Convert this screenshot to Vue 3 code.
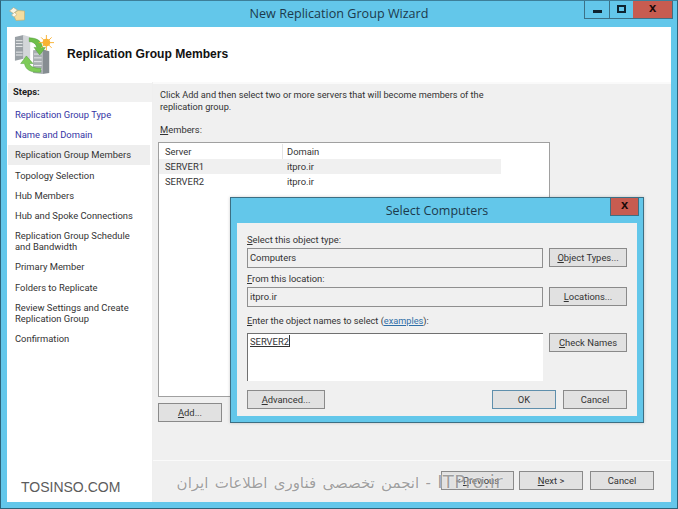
<template>
  <div class="wizard">
    <div class="titlebar">
      <svg class="app-icon" width="16" height="14" viewBox="0 0 16 14">
        <path d="M4 7 L9 3.5 L15.5 4 L15.5 13 L7 13.5 Z" fill="#f4dd9f" stroke="#c9ab66" stroke-width="0.6" />
        <path d="M0.5 4 L4.5 0.5 L8.5 3 L4.5 6.5 Z" fill="#f8f3e2" stroke="#b9a676" stroke-width="0.6" />
        <path d="M2.5 8 L5.5 5.5 L8 7.5 L5 10 Z" fill="#fbf6e6" stroke="#b9a676" stroke-width="0.5" />
      </svg>
      <span class="title">New Replication Group Wizard</span>
      <div class="controls">
        <div class="ctl ctl-min"><span class="min-glyph"></span></div>
        <div class="ctl ctl-max"><span class="max-glyph"></span></div>
        <div class="ctl ctl-close">x</div>
      </div>
    </div>

    <div class="client">
      <div class="header">
        <svg class="header-icon" width="40" height="40" viewBox="0 0 42 42">
          <path d="M1 2 L10 0 L10 25 L1 27 Z" fill="#9aa1a6" />
          <path d="M10 0 L17 2 L17 26 L10 25 Z" fill="#d3d6d9" />
          <path d="M2 6 H9 M2 9 H9 M2 12 H9 M2 18 H9 M2 21 H9" stroke="#eceeef" stroke-width="1" />
          <path d="M20 16 L30 15 L30 41 L20 40 Z" fill="#a9afb3" />
          <path d="M30 15 L37 17 L37 40 L30 41 Z" fill="#868d92" />
          <path d="M21 20 H29 M21 24 H29 M21 28 H29 M21 32 H29 M21 36 H29" stroke="#e8eaec" stroke-width="1" />
          <path d="M16 3 C25 3 29 7 30 13 L33 13 L27 21 L21 13 L24 13 C23 9 20 7 16 7 Z" fill="#6fbf4a" stroke="#4a9a35" stroke-width="0.5" />
          <path d="M28 39 C17 40 12 36 11 30 L7 30 L13 22 L20 30 L16 30 C17 33 21 35 28 35 Z" fill="#7ecb58" stroke="#4a9a35" stroke-width="0.5" />
          <circle cx="34" cy="8" r="4" fill="#f9b233" />
          <path d="M34 0 V16 M26 8 H42 M28.5 2.5 L39.5 13.5 M39.5 2.5 L28.5 13.5" stroke="#f9b233" stroke-width="1" />
        </svg>
        <span class="header-text">Replication Group Members</span>
      </div>

      <div class="middle">
        <div class="steps">
          <div class="steps-head">Steps:</div>
          <div
            v-for="step in steps"
            :key="step.name"
            class="step"
            :class="{ done: step.state === 'done', current: step.state === 'current' }"
          >{{ step.name }}</div>
        </div>

        <div class="content">
          <div class="main">
            <p class="intro">Click Add and then select two or more servers that will become members of the replication group.</p>
            <div class="members-label"><u>M</u>embers:</div>
            <div class="list">
              <div class="list-head">
                <div class="col-server">Server</div>
                <div class="col-domain">Domain</div>
              </div>
              <div v-for="(m, i) in members" :key="m.server" class="list-row" :class="{ selected: i === 0 }">
                <div class="col-server">{{ m.server }}</div>
                <div class="col-domain">{{ m.domain }}</div>
              </div>
            </div>
            <div class="add-row">
              <button class="btn add-btn"><u>A</u>dd...</button>
            </div>
          </div>
          <div class="footer">
            <button class="btn foot-btn prev">&lt; <u>P</u>revious</button>
            <button class="btn foot-btn"><u>N</u>ext &gt;</button>
            <button class="btn foot-btn cancel">Cancel</button>
          </div>
        </div>
      </div>
    </div>

    <div class="dialog">
      <div class="dialog-title">
        <span>Select Computers</span>
        <div class="dialog-close">x</div>
      </div>
      <div class="dialog-body">
        <label class="field-label"><u>S</u>elect this object type:</label>
        <div class="field-row">
          <div class="readonly">Computers</div>
          <button class="btn side-btn"><u>O</u>bject Types...</button>
        </div>
        <label class="field-label"><u>F</u>rom this location:</label>
        <div class="field-row">
          <div class="readonly">itpro.ir</div>
          <button class="btn side-btn"><u>L</u>ocations...</button>
        </div>
        <label class="field-label names-label"><u>E</u>nter the object names to select (<a class="link">examples</a>):</label>
        <div class="field-row names-row">
          <div class="names"><u>SERVER2</u><span class="caret"></span></div>
          <button class="btn side-btn"><u>C</u>heck Names</button>
        </div>
        <div class="dialog-actions">
          <button class="btn side-btn"><u>A</u>dvanced...</button>
          <div class="spacer"></div>
          <button class="btn ok-btn">OK</button>
          <button class="btn ok-btn cancel-btn">Cancel</button>
        </div>
      </div>
    </div>

    <div class="mark-left">TOSINSO.COM</div>
    <div class="mark-right"><span class="mark-latin">ITPro.ir</span> - انجمن تخصصی فناوری اطلاعات ایران</div>
  </div>
</template>

<script setup>
const steps = [
  { name: 'Replication Group Type', state: 'done' },
  { name: 'Name and Domain', state: 'done' },
  { name: 'Replication Group Members', state: 'current' },
  { name: 'Topology Selection' },
  { name: 'Hub Members' },
  { name: 'Hub and Spoke Connections' },
  { name: 'Replication Group Schedule and Bandwidth' },
  { name: 'Primary Member' },
  { name: 'Folders to Replicate' },
  { name: 'Review Settings and Create Replication Group' },
  { name: 'Confirmation' },
]

const members = [
  { server: 'SERVER1', domain: 'itpro.ir' },
  { server: 'SERVER2', domain: 'itpro.ir' },
]
</script>

<style>
html, body {
  margin: 0;
  padding: 0;
  background: #63c7ea;
}
</style>

<style scoped>
.wizard {
  position: relative;
  width: 678px;
  height: 509px;
  box-sizing: border-box;
  display: flex;
  flex-direction: column;
  background: #63c7ea;
  border: 1px solid #2d6379;
  border-top-color: #3d7f99;
  overflow: hidden;
  font-family: Roboto, "Liberation Sans", sans-serif;
  font-size: 9.4px;
  color: #333;
}

.titlebar {
  height: 26px;
  display: flex;
  align-items: center;
  position: relative;
  flex-shrink: 0;
}
.app-icon {
  margin-left: 8px;
}
.title {
  position: absolute;
  left: 0;
  right: 0;
  top: 4px;
  text-align: center;
  font-family: "Open Sans", sans-serif;
  font-size: 12.6px;
  color: #1c3a4c;
}
.controls {
  position: absolute;
  right: 4px;
  top: -1px;
  display: flex;
  height: 19px;
  border: 1px solid #3c7186;
  border-top: none;
  box-sizing: border-box;
}
.ctl {
  display: flex;
  align-items: center;
  justify-content: center;
  box-sizing: border-box;
  height: 18px;
}
.ctl-min {
  width: 25px;
  border-right: 1px solid #3c7186;
}
.min-glyph {
  width: 9px;
  height: 3px;
  margin-top: 4px;
  background: #0e2430;
}
.ctl-max {
  width: 23px;
}
.max-glyph {
  width: 5px;
  height: 4px;
  border: 2px solid #0e2430;
}
.ctl-close {
  width: 39px;
  background: #c75c50;
  color: #1a0a08;
  font-family: "Liberation Sans", sans-serif;
  font-weight: 700;
  font-size: 13px;
  line-height: 14px;
  padding-bottom: 3px;
}

.client {
  flex: 1;
  margin: 0 6px 6px;
  display: flex;
  flex-direction: column;
  background: #fff;
  min-height: 0;
}
.header {
  height: 55px;
  display: flex;
  align-items: center;
  flex-shrink: 0;
}
.header-icon {
  margin-left: 7px;
}
.header-text {
  margin-left: 13px;
  margin-bottom: 1px;
  font-family: "Liberation Sans", sans-serif;
  font-weight: 700;
  font-size: 12.1px;
  color: #111;
}

.middle {
  flex: 1;
  display: flex;
  min-height: 0;
}
.steps {
  width: 146px;
  flex-shrink: 0;
  border-right: 1px solid #efefef;
  padding-top: 1px;
  box-sizing: border-box;
}
.steps-head {
  height: 19px;
  line-height: 18px;
  margin: 0 0 3px 1px;
  padding-left: 5px;
  background: #f1f1f1;
  font-weight: 700;
  color: #222;
}
.step {
  margin: 0 2px 0 1px;
  padding: 4.3px 7px;
  line-height: 11.5px;
  color: #333;
}
.step.done {
  color: #3434a4;
}
.step.current {
  background: #eeeeee;
}

.content {
  flex: 1;
  display: flex;
  flex-direction: column;
  background: #f0f0f0;
  border-top: 2px solid #fafafa;
  min-width: 0;
}
.main {
  flex: 1;
  padding: 5px 0 0 5px;
  display: flex;
  flex-direction: column;
  min-height: 0;
  border-bottom: 1px solid #fafafa;
}
.intro {
  margin: 0 0 0 2px;
  width: 335px;
  font-size: 9.2px;
  line-height: 12px;
}
.members-label {
  margin: 11px 0 0 2px;
  line-height: 12px;
}
.list {
  width: 392px;
  flex: 1;
  margin-top: 6px;
  padding-top: 1px;
  box-sizing: border-box;
  background: #fff;
  border: 1px solid #a0a0a0;
}
.list-head {
  display: flex;
  height: 15px;
  line-height: 15px;
}
.list-head .col-server {
  border-right: 1px solid #e5e5e5;
}
.list-row {
  display: flex;
  height: 15px;
  line-height: 15px;
}
.list-row.selected {
  background: #f0f0f0;
  width: 342px;
}
.col-server {
  width: 124px;
  padding-left: 6px;
  box-sizing: border-box;
}
.col-domain {
  padding-left: 4px;
}
.add-row {
  height: 63px;
  padding-top: 6px;
  box-sizing: border-box;
}

.btn {
  height: 19px;
  padding: 0;
  box-sizing: border-box;
  background: #e1e1e1;
  border: 1px solid #8a8a8a;
  font-family: Roboto, "Liberation Sans", sans-serif;
  font-size: 9.4px;
  color: #333;
  line-height: 15px;
}
.add-btn {
  width: 64px;
}
.footer {
  height: 41px;
  flex-shrink: 0;
  display: flex;
  justify-content: flex-end;
  align-items: flex-start;
  gap: 5px;
  padding: 10px 17px 0 0;
  box-sizing: border-box;
}
.foot-btn {
  width: 64px;
}
.prev {
  width: 73px;
}
.cancel {
  margin-left: 2px;
}

.dialog {
  position: absolute;
  left: 229px;
  top: 196px;
  width: 414px;
  height: 226px;
  box-sizing: border-box;
  display: flex;
  flex-direction: column;
  background: #63c7ea;
  border: 1px solid #3c6f84;
  box-shadow: 0 0 3px rgba(0, 0, 0, 0.2);
}
.dialog-title {
  height: 25px;
  flex-shrink: 0;
  position: relative;
  text-align: center;
  line-height: 26px;
  font-family: "Open Sans", sans-serif;
  font-size: 12.5px;
  color: #1c3a4c;
}
.dialog-close {
  position: absolute;
  right: 4px;
  top: 0;
  width: 29px;
  height: 18px;
  box-sizing: border-box;
  background: #c75c50;
  border: 1px solid #3c6f84;
  border-top: none;
  color: #1a0a08;
  font-family: "Liberation Sans", sans-serif;
  font-weight: 700;
  font-size: 13px;
  line-height: 14px;
}
.dialog-body {
  flex: 1;
  margin: 0 6px 6px;
  background: #f0f0f0;
  padding: 9px 10px 0 10px;
  display: flex;
  flex-direction: column;
}
.field-label {
  height: 15px;
  line-height: 16px;
}
.names-label {
  height: 11px;
  line-height: 12px;
  margin-top: 5px;
  font-size: 9.2px;
}
.field-row {
  display: flex;
  align-items: center;
  gap: 6px;
  height: 21px;
  margin-bottom: 3px;
}
.readonly {
  flex: 1;
  height: 20px;
  box-sizing: border-box;
  border: 1px solid #8f8f8f;
  background: #f0f0f0;
  padding-left: 2px;
  line-height: 17px;
}
.side-btn {
  width: 78px;
  flex-shrink: 0;
}
.names-row {
  height: 48px;
  align-items: flex-start;
  margin-top: 7px;
  margin-bottom: 0;
}
.names {
  flex: 1;
  height: 48px;
  box-sizing: border-box;
  background: #fff;
  border-top: 1px solid #707070;
  border-left: 1px solid #707070;
  padding: 1px 0 0 2px;
  line-height: 13px;
}
.caret {
  display: inline-block;
  width: 1px;
  height: 12px;
  background: #333;
  vertical-align: -2px;
}
.dialog-actions {
  display: flex;
  gap: 7px;
  margin-top: 9px;
}
.spacer {
  flex: 1;
}
.ok-btn {
  width: 64px;
  border-color: #5f8fac;
}
.cancel-btn {
  border-color: #8a8a8a;
}
.link {
  color: #2f6fa8;
  text-decoration: underline;
}

.mark-left {
  position: absolute;
  left: 20px;
  top: 478px;
  font-family: "Liberation Sans", sans-serif;
  font-size: 14px;
  line-height: 16px;
  color: #5c5c5c;
  text-shadow: 0 0 2px #fff;
}
.mark-right {
  position: absolute;
  left: 174px;
  top: 469px;
  width: 328px;
  white-space: nowrap;
  direction: rtl;
  font-family: "DejaVu Sans", sans-serif;
  font-size: 15px;
  word-spacing: 1.5px;
  line-height: 24px;
  color: rgba(120, 120, 120, 0.7);
  text-shadow: 0 0 2px rgba(255, 255, 255, 0.9);
  pointer-events: none;
}
.mark-latin {
  font-size: 18px;
  letter-spacing: 0.4px;
}
</style>
